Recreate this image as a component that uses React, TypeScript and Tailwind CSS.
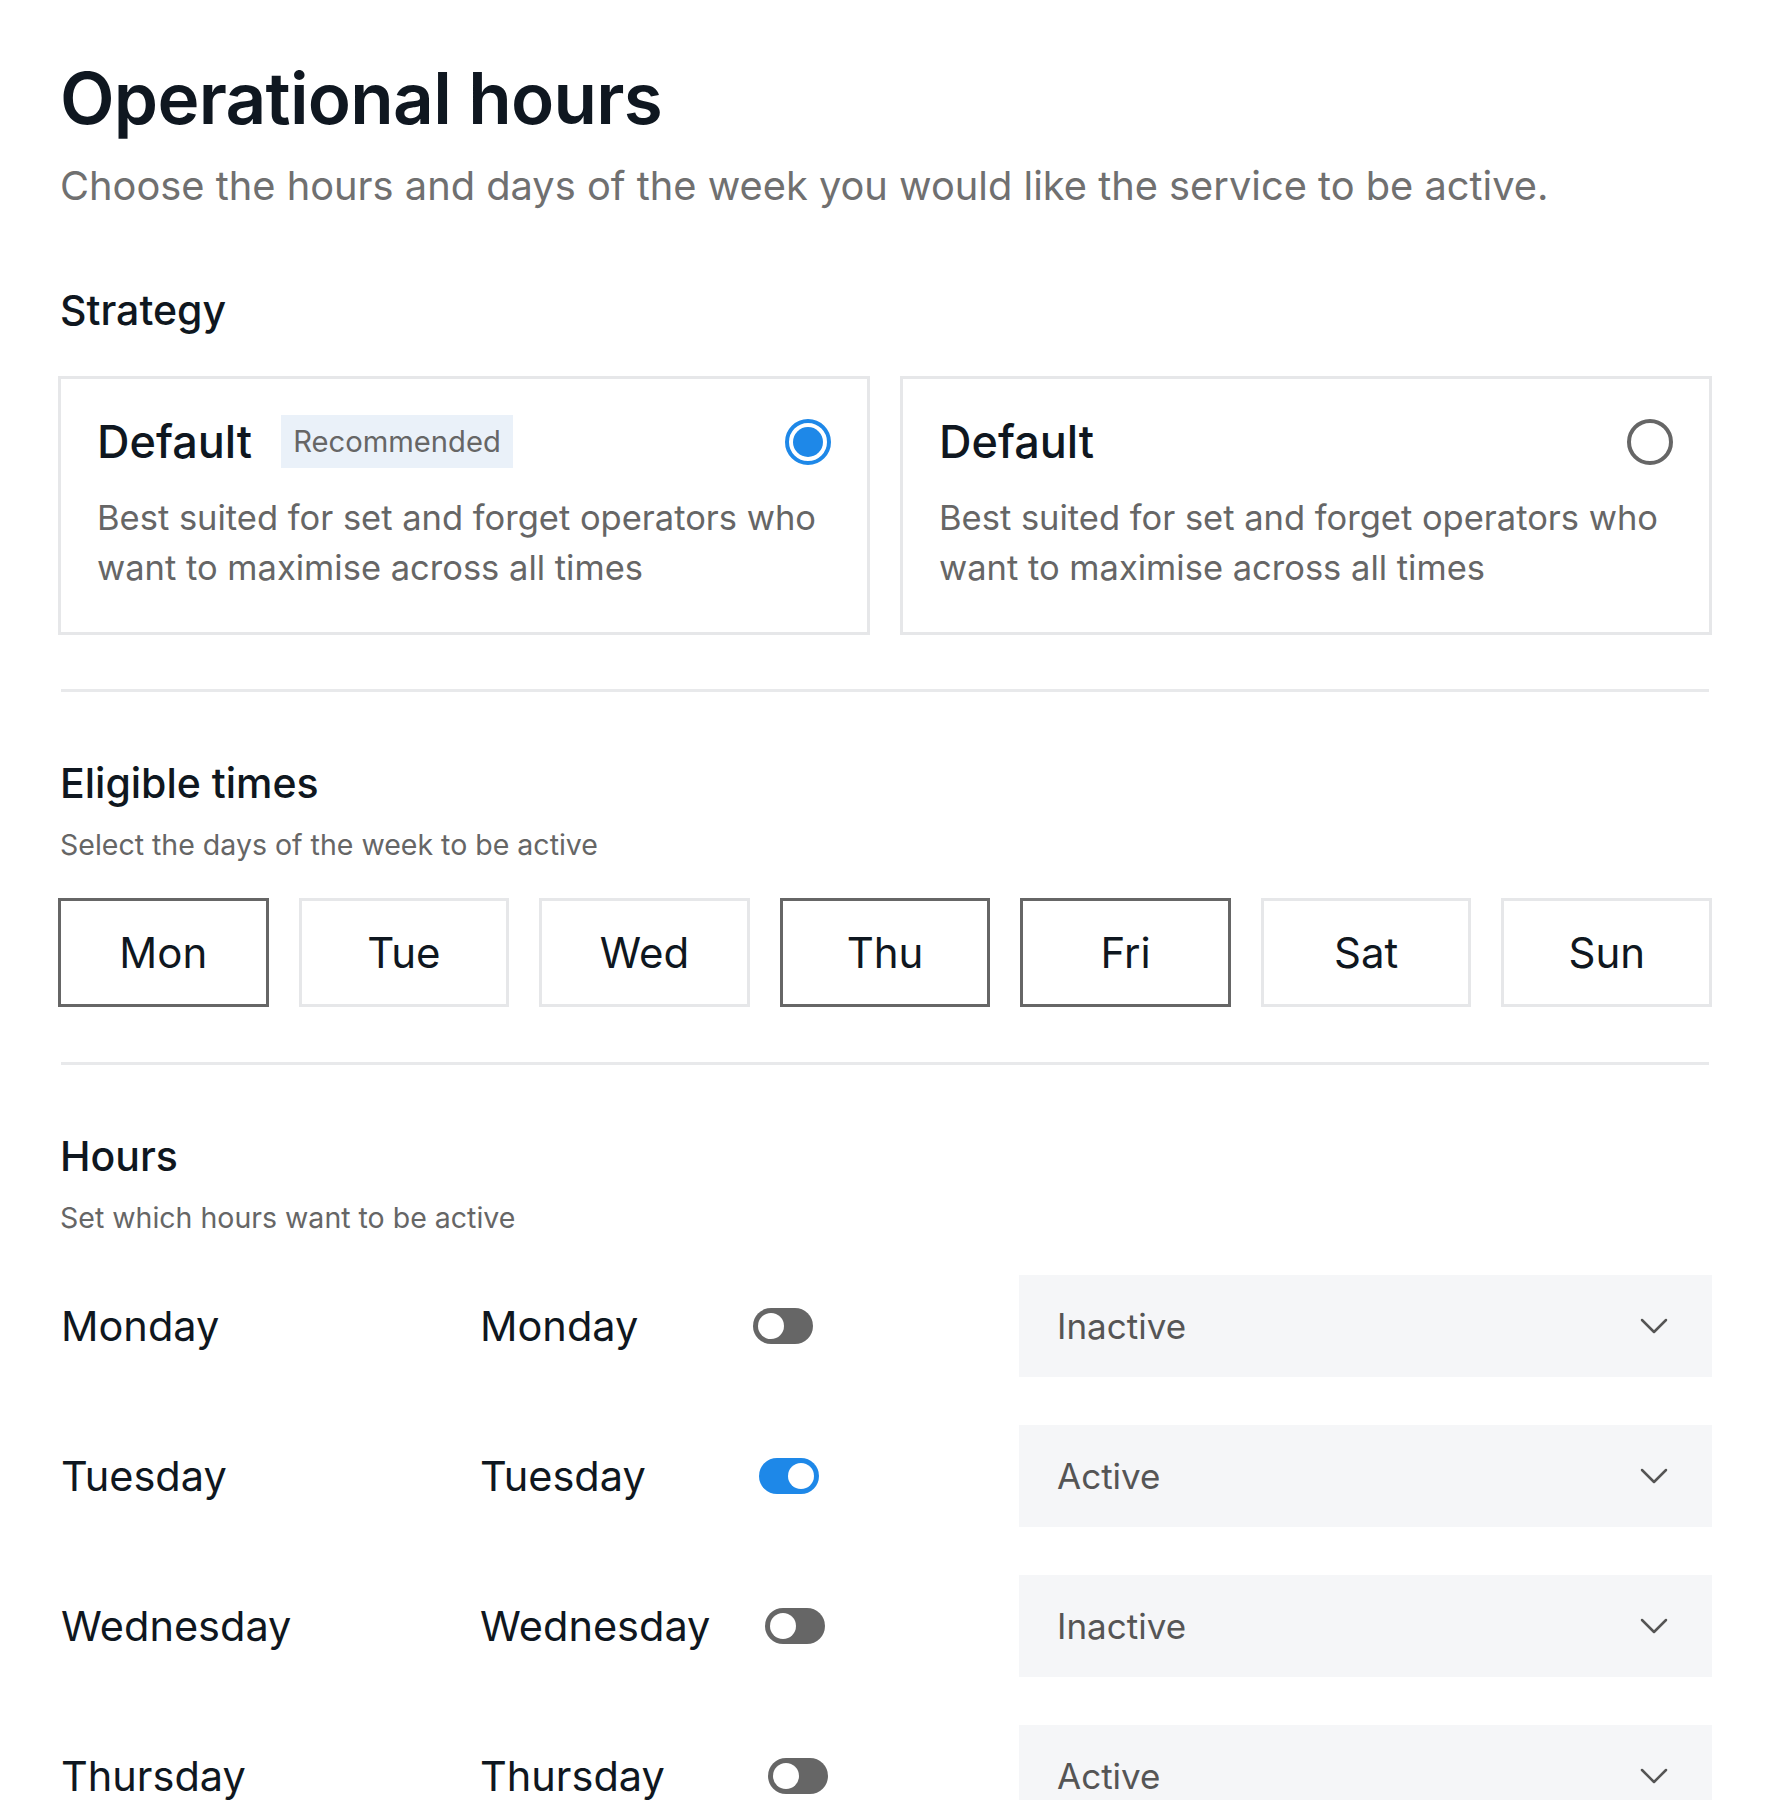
import React from "react";

const days = [
  { label: "Mon", on: true },
  { label: "Tue", on: false },
  { label: "Wed", on: false },
  { label: "Thu", on: true },
  { label: "Fri", on: true },
  { label: "Sat", on: false },
  { label: "Sun", on: false },
];

const rows = [
  { day: "Monday", on: false, status: "Inactive", shift: "ml-0" },
  { day: "Tuesday", on: true, status: "Active", shift: "ml-[6px]" },
  { day: "Wednesday", on: false, status: "Inactive", shift: "ml-[12px]" },
  { day: "Thursday", on: false, status: "Active", shift: "ml-[15px]" },
];

function Radio({ checked }: { checked: boolean }) {
  if (checked) {
    return (
      <div className="w-[46px] h-[46px] rounded-full border-[4px] border-[#1e88e8] p-[4px] shrink-0">
        <div className="w-full h-full rounded-full bg-[#1e88e8]" />
      </div>
    );
  }
  return <div className="w-[46px] h-[46px] rounded-full border-[4px] border-[#666666] shrink-0" />;
}

function Toggle({ on }: { on: boolean }) {
  return (
    <div
      className={
        on
          ? "w-[60px] h-[36px] rounded-full bg-[#1e88e8] flex items-center justify-end px-[5px]"
          : "w-[60px] h-[36px] rounded-full bg-[#666666] flex items-center justify-start px-[5px]"
      }
    >
      <div className="w-[26px] h-[26px] rounded-full bg-white" />
    </div>
  );
}

function StrategyCard({ recommended, checked }: { recommended: boolean; checked: boolean }) {
  return (
    <div className="flex-1 border-[3px] border-[#e6e7e9] px-[36px] pt-[33px] pb-[39px]">
      <div className="flex items-center justify-between h-[60px]">
        <div className="flex items-center gap-[29px]">
          <span className="text-[45px] font-medium text-[#0f1720] leading-none">Default</span>
          {recommended && (
            <span className="bg-[#eaf1f9] text-[#666666] text-[29.2px] px-[12px] h-[53px] flex items-center">
              Recommended
            </span>
          )}
        </div>
        <Radio checked={checked} />
      </div>
      <p className="mt-[21px] text-[34.5px] leading-[50px] text-[#666666]">
        Best suited for set and forget operators who want to maximise across all times
      </p>
    </div>
  );
}

function Chevron() {
  return (
    <svg width="28" height="18" viewBox="0 0 28 18" fill="none" stroke="#555555" strokeWidth="2.5" strokeLinecap="round" strokeLinejoin="round">
      <path d="M2 3l12 12 12-12" />
    </svg>
  );
}

export default function App() {
  return (
    <div className="bg-white min-h-[1800px] px-[58px] pt-[63px] text-[#0f1720]" style={{ fontFamily: "Inter, 'Noto Sans', sans-serif" }}>
      <h1 className="text-[71px] font-semibold leading-none tracking-[-0.01em] text-[#0f1720] pl-[2px]">Operational hours</h1>
      <p className="mt-[32px] text-[39.8px] leading-none text-[#707070] pl-[2px]">
        Choose the hours and days of the week you would like the service to be active.
      </p>

      <h2 className="mt-[84px] text-[41px] font-medium leading-none pl-[2px]">Strategy</h2>
      <div className="mt-[45px] flex gap-[30px]">
        <StrategyCard recommended checked />
        <StrategyCard recommended={false} checked={false} />
      </div>

      <div className="mt-[54px] mx-[3px] border-t-[3px] border-[#e8e9eb]" />

      <h2 className="mt-[71px] text-[41px] font-medium leading-none pl-[2px]">Eligible times</h2>
      <p className="mt-[27px] text-[28.5px] leading-none text-[#666666] pl-[2px]">Select the days of the week to be active</p>

      <div className="mt-[39px] flex gap-[30px]">
        {days.map((d) => (
          <div
            key={d.label}
            className={
              d.on
                ? "flex-1 h-[109px] border-[3px] border-[#666666] flex items-center justify-center text-[42px]"
                : "flex-1 h-[109px] border-[3px] border-[#e6e7e9] flex items-center justify-center text-[42px]"
            }
          >
            {d.label}
          </div>
        ))}
      </div>

      <div className="mt-[55px] mx-[3px] border-t-[3px] border-[#e8e9eb]" />

      <h2 className="mt-[71px] text-[41px] font-medium leading-none pl-[2px]">Hours</h2>
      <p className="mt-[27px] text-[28.5px] leading-none text-[#666666] pl-[2px]">Set which hours want to be active</p>

      <div className="mt-[42px] flex flex-col gap-[48px]">
        {rows.map((r) => (
          <div key={r.day} className="flex items-center h-[102px]">
            <div className="w-[422px] text-[41.5px] pl-[3px]">{r.day}</div>
            <div className="flex-1 flex items-center">
              <div className="w-[273px] text-[41.5px]">{r.day}</div>
              <div className={r.shift}>
                <Toggle on={r.on} />
              </div>
            </div>
            <div className="w-[693px] h-[102px] bg-[#f5f6f8] flex items-center justify-between pl-[38px] pr-[44px]">
              <span className="text-[35px] text-[#555555]">{r.status}</span>
              <Chevron />
            </div>
          </div>
        ))}
      </div>
    </div>
  );
}
